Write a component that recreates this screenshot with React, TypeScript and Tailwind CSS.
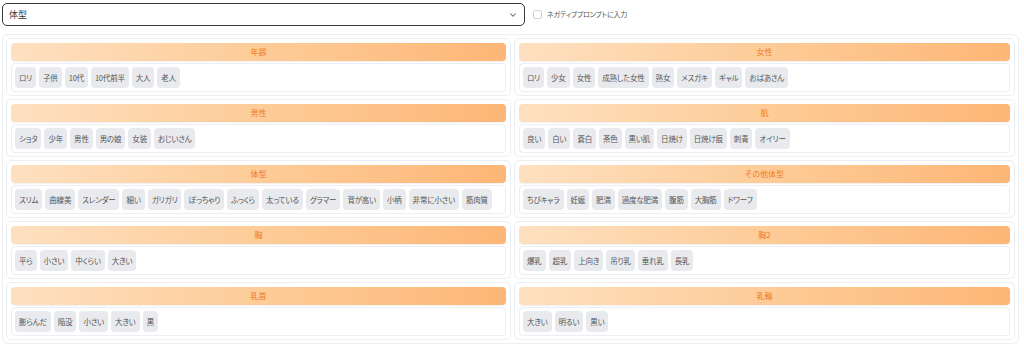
import React from "react";

const groups: { title: string; items: string[] }[] = [
  { title: "年齢", items: ["ロリ", "子供", "10代", "10代前半", "大人", "老人"] },
  { title: "女性", items: ["ロリ", "少女", "女性", "成熟した女性", "熟女", "メスガキ", "ギャル", "おばあさん"] },
  { title: "男性", items: ["ショタ", "少年", "男性", "男の娘", "女装", "おじいさん"] },
  { title: "肌", items: ["良い", "白い", "蒼白", "茶色", "黒い肌", "日焼け", "日焼け痕", "刺青", "オイリー"] },
  {
    title: "体型",
    items: ["スリム", "曲線美", "スレンダー", "細い", "ガリガリ", "ぽっちゃり", "ふっくら", "太っている", "グラマー", "背が高い", "小柄", "非常に小さい", "筋肉質"],
  },
  { title: "その他体型", items: ["ちびキャラ", "妊娠", "肥満", "過度な肥満", "腹筋", "大胸筋", "ドワーフ"] },
  { title: "胸", items: ["平ら", "小さい", "中くらい", "大きい"] },
  { title: "胸2", items: ["爆乳", "超乳", "上向き", "吊り乳", "垂れ乳", "長乳"] },
  { title: "乳首", items: ["膨らんだ", "陥没", "小さい", "大きい", "黒"] },
  { title: "乳輪", items: ["大きい", "明るい", "黒い"] },
];

export default function App() {
  return (
    <div
      className="w-[1024px] h-[353px] bg-white px-[2px] pt-[3px] text-[#444] [font-feature-settings:'palt'_1]"
      style={{ fontFamily: '"Noto Sans CJK JP", "Noto Sans", sans-serif' }}
    >
      <div className="flex items-center">
        <div className="w-[523px] h-[23px] rounded-[5px] border-[1.5px] border-[#3a3a3a] flex items-center justify-between pl-[6px] pr-[6px]">
          <span className="text-[9px] text-[#333] leading-none">体型</span>
          <svg width="10" height="10" viewBox="0 0 24 24" fill="none" stroke="#666" strokeWidth="2.5" strokeLinecap="round" strokeLinejoin="round">
            <path d="m6 9 6 6 6-6" />
          </svg>
        </div>
        <div className="ml-[8px] w-[9px] h-[9px] rounded-[2px] border border-[#d1d5db] bg-white" />
        <span className="ml-[5px] text-[7px] tracking-[-0.2px] text-[#555] leading-none">ネガティブプロンプトに入力</span>
      </div>

      <div className="mt-[8px] w-[1017px] rounded-[6px] border border-[#eceef1] p-[3px] grid grid-cols-[505px_1fr] gap-[3px]">
        {groups.map((g, i) => (
          <div key={i} className="rounded-[5px] border border-[#eceef1] px-[4px] pt-[4px] pb-[3px] flex flex-col gap-[2px]">
            <div className="h-[18px] rounded-[4px] bg-gradient-to-r from-[#fee0c0] via-[#fdcc98] to-[#fdb676] shadow-[0_1px_1px_rgba(0,0,0,0.06)] flex items-center justify-center">
              <span className="text-[8px] leading-none text-[#ef7a2a]">{g.title}</span>
            </div>
            <div className="rounded-[4px] border border-[#eceef1] bg-white p-[3px] flex flex-wrap gap-[3px]">
              {g.items.map((it, j) => (
                <div key={j} className="h-[21px] px-[4px] rounded-[4px] bg-[#e9eaee] flex items-center">
                  <span className="text-[7.5px] tracking-[-0.2px] leading-none text-[#555]">{it}</span>
                </div>
              ))}
            </div>
          </div>
        ))}
      </div>
    </div>
  );
}
